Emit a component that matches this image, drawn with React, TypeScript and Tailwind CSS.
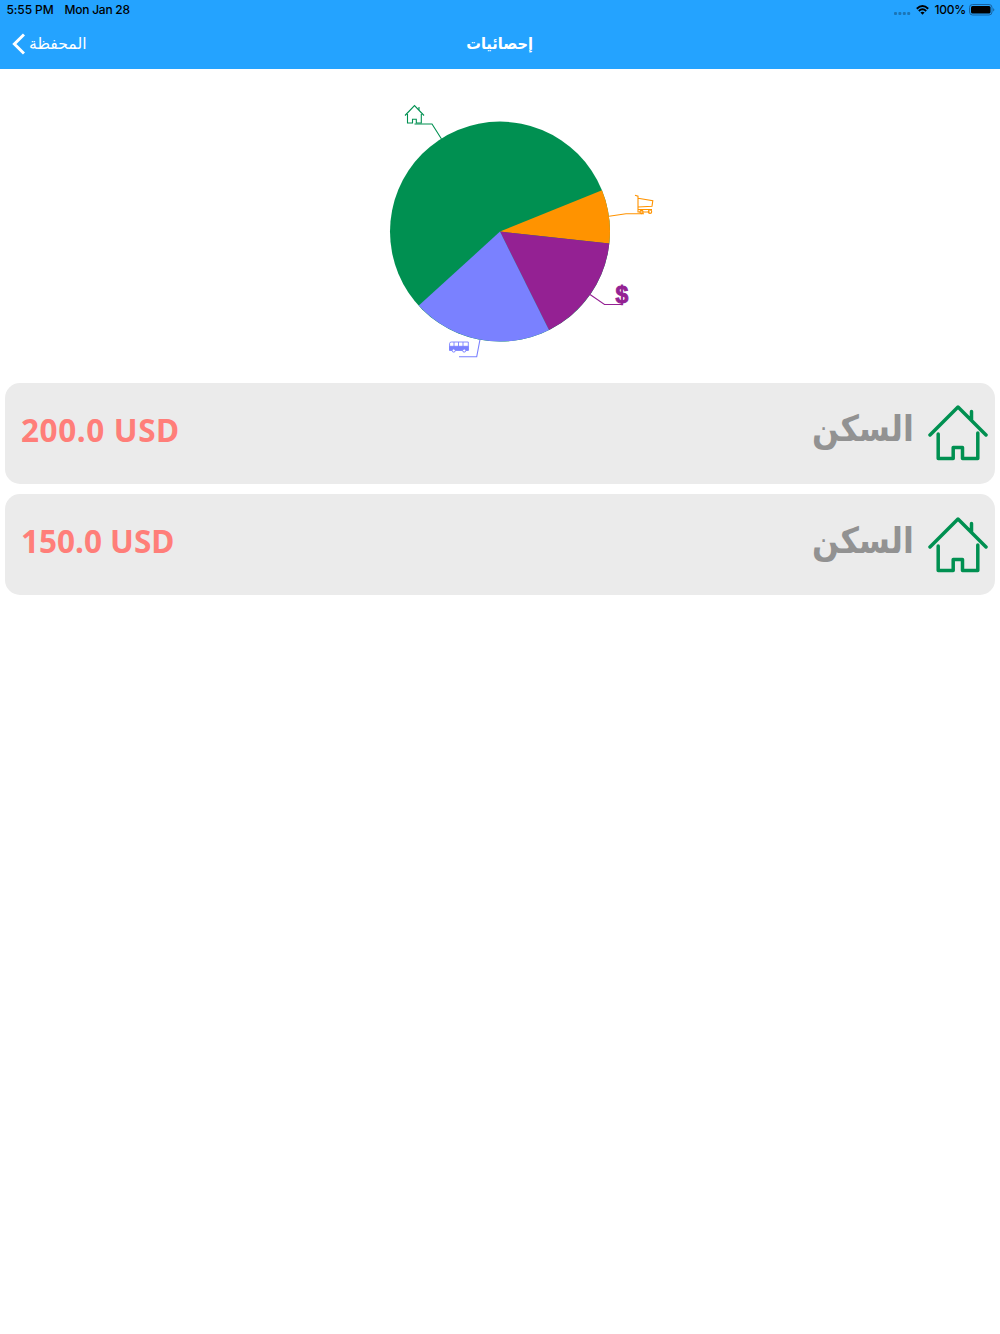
import type { ReactNode } from "react";

function HouseIcon({ className, stroke = 3.5 }: { className?: string; stroke?: number }) {
  return (
    <svg viewBox="0 0 60 56" className={className} fill="none" stroke="#009051" strokeWidth={stroke} strokeLinecap="round" strokeLinejoin="round">
      <path d="M2 30 30 2 58 30M43.5 15V6.5M10.2 29V53.5H25.2V42.5H34.5V53.5H49.8V28" />
    </svg>
  );
}

function StatusBar() {
  return (
    <div className="flex h-5 items-center justify-between pl-[6.5px] pr-[5px] font-['Inter',sans-serif] text-[12px] font-medium leading-5 text-black">
      <div className="flex gap-[11px] whitespace-pre">
        <span className="tracking-[-0.1px]">5:55 PM</span>
        <span className="tracking-[-0.25px]">Mon Jan 28</span>
      </div>
      <div className="flex items-center">
        <svg width="17" height="4" viewBox="0 0 17 4" className="mr-[5px] mt-[7px]" fill="#1b75b7">
          <rect x="0" y="0" width="3" height="3" rx="1" />
          <rect x="4.4" y="0" width="3" height="3" rx="1" />
          <rect x="8.8" y="0" width="3" height="3" rx="1" />
          <rect x="13.2" y="0" width="3" height="3" rx="1" />
        </svg>
        <svg width="13" height="10" viewBox="0 0 13 10" className="mr-[5px]" fill="none" stroke="#000" strokeWidth="1.9">
          <path d="M.8 3.8Q6.5-1.6 12.2 3.8M2.8 6Q6.5 2.6 10.2 6" />
          <path d="M4.4 7.6Q6.5 5.8 8.6 7.6L6.5 9.8Z" fill="#000" stroke="none" />
        </svg>
        <span className="mr-[3px] tracking-[-0.2px]">100%</span>
        <svg width="26" height="12" viewBox="0 0 26 12">
          <rect x=".5" y=".5" width="22.5" height="10.5" rx="3" fill="none" stroke="#1762a0" />
          <rect x="2" y="2" width="19.5" height="7.5" rx="1.5" />
          <path d="M24.2 4Q26.5 5.8 24.2 7.6Z" fill="#1762a0" />
        </svg>
      </div>
    </div>
  );
}

function NavBar() {
  return (
    <div className="grid h-[48.5px] grid-cols-3 items-center text-white">
      <div className="flex items-center pl-3">
        <svg width="13" height="22" viewBox="0 0 13 22" fill="none" stroke="#fff" strokeWidth="3">
          <path d="M12 1.5 2.4 11 12 20.5" />
        </svg>
        <span dir="rtl" className="ml-1 font-['DejaVu_Sans',sans-serif] text-[15.7px]">المحفظة</span>
      </div>
      <h1 dir="rtl" className="scale-x-[0.91] text-center font-['DejaVu_Sans',sans-serif] text-[16px] font-bold">إحصائيات</h1>
      <span />
    </div>
  );
}

function PieChart() {
  return (
    <svg width="300" height="270" viewBox="380 95 300 270" className="ml-[380px] mt-[26.5px] block shrink-0">
      <circle cx="500" cy="231.6" r="110" fill="#009051" />
      <path d="M500 231.6 602 190.3A110 110 0 0 1 609.3 243.6Z" fill="#ff9300" />
      <path d="M500 231.6 609.3 243.6A110 110 0 0 1 549 330Z" fill="#942193" />
      <path d="M500 231.6 549 330A110 110 0 0 1 418.8 305.6Z" fill="#7a81ff" />
      <g fill="none" strokeWidth="1.1">
        <path d="M414.5 124H432L441.5 139" stroke="#009051" />
        <path d="M609 216.3 626 213.8H644" stroke="#ff9300" />
        <path d="M590 294.5 604.5 304.5H622.5" stroke="#942193" />
        <path d="M480 339.5 476.7 356.8H459" stroke="#7a81ff" />
        <path d="M405 115.5 414.5 105.5 424 115.5M419 110V107M407.5 114V123H412.5V119.3H416.3V123H421.3V114" stroke="#009051" />
        <path d="M635 195.2 638 196.2V209.5H652M638 198.3 652.8 200.7 652 206.3 638 207M638 209.5V212H650" stroke="#ff9300" />
        <circle cx="641.5" cy="212" r="1.6" stroke="#ff9300" />
        <circle cx="650" cy="211.7" r="1.7" stroke="#ff9300" />
        <path d="M449.6 350.3V343.5Q449.6 342 451.5 342H468.3V350.3ZM454 342V347M458.5 342V347M463 342V347M449.6 346.3H468.3" stroke="#7a81ff" strokeWidth=".9" />
      </g>
      <rect x="449.2" y="346.3" width="19.5" height="4.3" fill="#7a81ff" />
      <circle cx="453.7" cy="350.5" r="1.6" fill="#fff" stroke="#7a81ff" />
      <circle cx="464.2" cy="350.5" r="1.6" fill="#fff" stroke="#7a81ff" />
      <text x="622" y="302.8" textAnchor="middle" fontFamily="Liberation Sans, sans-serif" fontSize="23" fontWeight="700" fill="#942193" stroke="#942193" strokeWidth=".9">$</text>
    </svg>
  );
}

function ExpenseCard({ children, tracking }: { children: ReactNode; tracking: string }) {
  return (
    <li className="flex h-[101.5px] items-center justify-between rounded-[15px] bg-[#ebebeb] pl-4 pr-[7px]">
      <span className={`whitespace-pre pb-2 font-['Noto_Sans',sans-serif] text-[31.5px] font-bold text-[#ff7e79] ${tracking}`}>{children}</span>
      <div className="flex items-center">
        <span dir="rtl" className="mr-[14px] origin-right scale-x-[0.88] pb-2 font-['DejaVu_Sans',sans-serif] text-[36px] font-bold text-[#929292]">السكن</span>
        <HouseIcon className="h-[56px] w-[60px]" />
      </div>
    </li>
  );
}

export default function App() {
  return (
    <main className="flex min-h-[1334px] w-[1000px] flex-col bg-white">
      <header className="h-[68.5px] bg-[#24a3ff]">
        <StatusBar />
        <NavBar />
      </header>
      <PieChart />
      <ul className="mt-[17.7px] flex flex-col gap-[9.7px] px-[5px]">
        <ExpenseCard tracking="tracking-[0.6px]">200.0 USD</ExpenseCard>
        <ExpenseCard tracking="tracking-normal">150.0 USD</ExpenseCard>
      </ul>
    </main>
  );
}
